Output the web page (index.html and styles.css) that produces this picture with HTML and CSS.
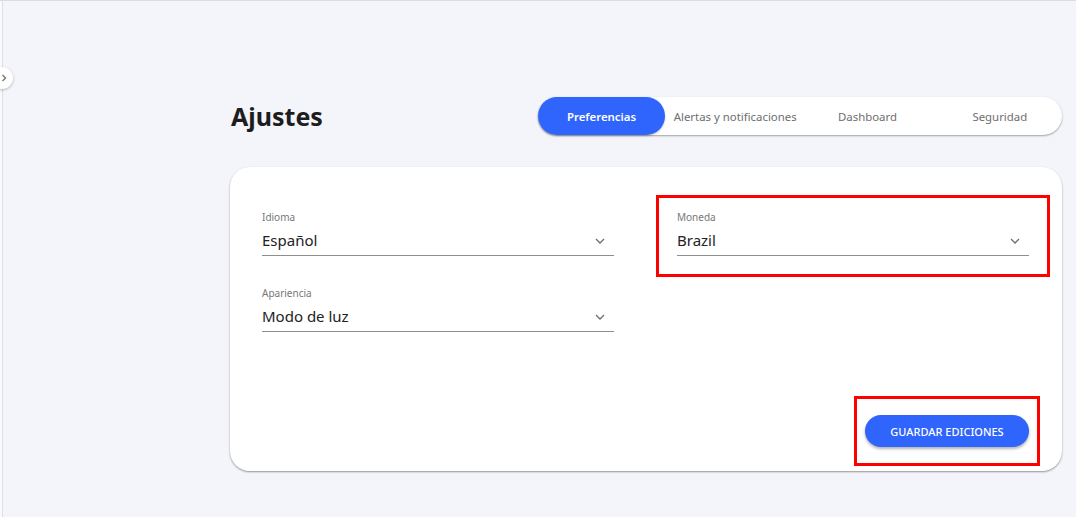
FILE: index.html
```html
<!DOCTYPE html>
<html lang="es">
<head>
<meta charset="utf-8">
<title>Ajustes</title>
<link rel="stylesheet" href="styles.css">
</head>
<body>
<div class="app">
  <aside class="sidebar">
    <button class="toggle" aria-label="Expandir">
      <svg width="10" height="10" viewBox="0 0 10 10"><path d="M3.5 2l3 3-3 3" fill="none" stroke="#777" stroke-width="1.4"/></svg>
    </button>
  </aside>
  <main class="main">
    <div class="content">
      <header class="header">
        <h1 class="title">Ajustes</h1>
        <nav class="tabs">
          <a class="tab active">Preferencias</a>
          <a class="tab">Alertas y notificaciones</a>
          <a class="tab">Dashboard</a>
          <a class="tab">Seguridad</a>
        </nav>
      </header>
      <section class="card">
        <div class="fields">
          <div class="field">
            <span class="label">Idioma</span>
            <div class="select"><span>Español</span>
              <svg class="chev" width="12" height="12" viewBox="0 0 12 12"><path d="M2 4l4 4 4-4" fill="none" stroke="#6f6f6f" stroke-width="1.3"/></svg>
            </div>
          </div>
          <div class="field highlight">
            <span class="label">Moneda</span>
            <div class="select"><span>Brazil</span>
              <svg class="chev" width="12" height="12" viewBox="0 0 12 12"><path d="M2 4l4 4 4-4" fill="none" stroke="#6f6f6f" stroke-width="1.3"/></svg>
            </div>
          </div>
          <div class="field">
            <span class="label">Apariencia</span>
            <div class="select"><span>Modo de luz</span>
              <svg class="chev" width="12" height="12" viewBox="0 0 12 12"><path d="M2 4l4 4 4-4" fill="none" stroke="#6f6f6f" stroke-width="1.3"/></svg>
            </div>
          </div>
        </div>
        <div class="actions">
          <div class="btn-wrap highlight-btn">
            <button class="btn">GUARDAR EDICIONES</button>
          </div>
        </div>
      </section>
    </div>
  </main>
</div>
</body>
</html>
```

FILE: styles.css
```css
* { box-sizing: border-box; }
html, body { margin: 0; height: 100%; }
body {
  background: #f4f5fa;
  font-family: "Noto Sans", "Open Sans", sans-serif;
  color: #222;
}
.app {
  display: flex;
  min-height: 517px;
  border-top: 1px solid #dcdcdf;
}
.sidebar {
  position: relative;
  width: 3px;
  background: #fafafc;
  border-right: 1px solid #dedee3;
  flex: none;
}
.toggle {
  position: absolute;
  left: -9px;
  top: 66px;
  width: 22px;
  height: 22px;
  border-radius: 50%;
  border: none;
  background: #fff;
  box-shadow: 0 1px 3px rgba(0,0,0,0.25);
  padding: 0 0 0 8px;
  display: flex;
  align-items: center;
  z-index: 2;
}
.main { flex: 1; }
.content {
  width: 832px;
  margin-left: 227px;
  padding-top: 96px;
}
.header {
  display: flex;
  align-items: center;
  justify-content: space-between;
  height: 38px;
}
.title {
  margin: 0 0 0 1px;
  font-size: 25px;
  font-weight: 700;
  color: #1d1d1f;
  padding-top: 0;
}
.tabs {
  display: flex;
  width: 524px;
  height: 38px;
  background: #fff;
  border-radius: 19px;
  box-shadow: 0 1px 2px rgba(0,0,0,0.35);
}
.tab {
  flex: 1;
  display: flex;
  align-items: center;
  justify-content: center;
  font-size: 11.4px;
  color: #6e6e6e;
  border-radius: 19px;
  white-space: nowrap;
  padding-left: 8px;
}
.tab.active {
  flex: 0 0 127px;
  background: #2f64fd;
  color: #fff;
  font-weight: 600;
  padding-left: 0;
  box-shadow: 0 1px 2px rgba(0,0,0,0.25);
}
.card {
  margin-top: 32px;
  background: #fff;
  border-radius: 20px;
  box-shadow: 0 1px 2px rgba(0,0,0,0.4);
  padding: 44px 33px 24px 32px;
}
.fields {
  display: grid;
  grid-template-columns: 352px 352px;
  justify-content: space-between;
  row-gap: 31px;
}
.field { display: flex; flex-direction: column; position: relative; }
.label {
  font-size: 10px;
  line-height: 12px;
  color: #777;
  margin-bottom: 4px;
}
.select {
  display: flex;
  align-items: center;
  justify-content: space-between;
  font-size: 15px;
  line-height: 22px;
  padding: 2px 8px 4px 0;
  border-bottom: 1px solid #8e8e8e;
  color: #222;
}
.chev { margin-top: 1px; }
.highlight::after {
  content: "";
  position: absolute;
  left: -21px;
  right: -21px;
  top: -16px;
  bottom: -21px;
  border: 3px solid #ff0000;
  pointer-events: none;
}
.actions {
  display: flex;
  justify-content: flex-end;
  margin-top: 83px;
}
.btn-wrap { position: relative; }
.highlight-btn::after {
  content: "";
  position: absolute;
  left: -11px;
  right: -11px;
  top: -19px;
  bottom: -19px;
  border: 3px solid #ff0000;
  pointer-events: none;
}
.btn {
  display: block;
  width: 164px;
  height: 32px;
  border: none;
  border-radius: 16px;
  background: #2f64fd;
  color: #fff;
  font-family: "Noto Sans", "Open Sans", sans-serif;
  font-size: 11px;
  font-weight: 500;
  box-shadow: 0 2px 3px rgba(0,0,0,0.3);
  padding: 0;
}
```
